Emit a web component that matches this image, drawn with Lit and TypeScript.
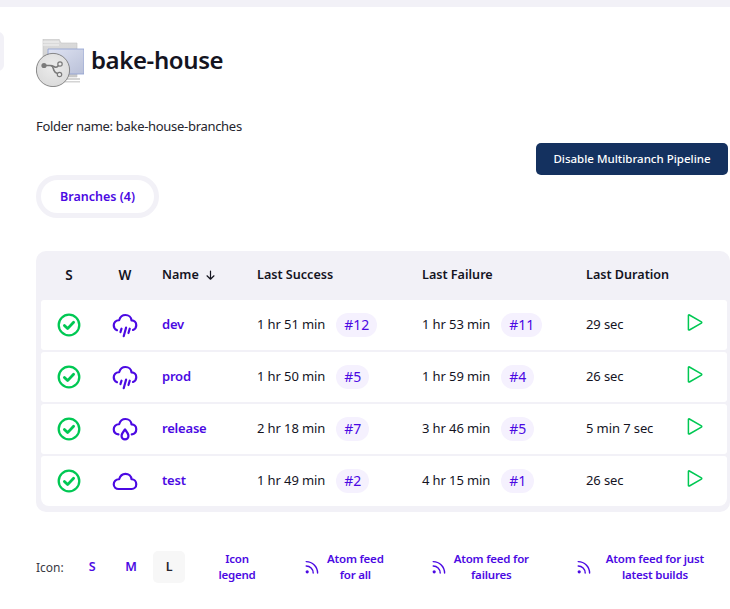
import { LitElement, html, css, svg } from 'lit';
import { customElement } from 'lit/decorators.js';

type Weather = 'rain' | 'drop' | 'cloud';

interface Branch {
  name: string;
  weather: Weather;
  success: [string, string];
  failure: [string, string];
  duration: string;
}

const BRANCHES: Branch[] = [
  { name: 'dev', weather: 'rain', success: ['1 hr 51 min', '#12'], failure: ['1 hr 53 min', '#11'], duration: '29 sec' },
  { name: 'prod', weather: 'rain', success: ['1 hr 50 min', '#5'], failure: ['1 hr 59 min', '#4'], duration: '26 sec' },
  { name: 'release', weather: 'drop', success: ['2 hr 18 min', '#7'], failure: ['3 hr 46 min', '#5'], duration: '5 min 7 sec' },
  { name: 'test', weather: 'cloud', success: ['1 hr 49 min', '#2'], failure: ['4 hr 15 min', '#1'], duration: '26 sec' },
];

const statusIcon = html`<svg class="status" viewBox="0 0 24 24" fill="none" stroke="#00c853" stroke-linecap="round" stroke-linejoin="round">
  <circle cx="12" cy="12" r="10.300" stroke-width="2.300"></circle>
  <path d="M7.400 12.400l3.200 3.200 6-6.400" stroke-width="2.800"></path>
</svg>`;

const weatherParts: Record<Weather, unknown> = {
  rain: svg`<path d="M4.600 16.800C2.800 16 1.600 14.200 1.600 12.200c0-2.600 2-4.600 4.600-4.600h.4C7.400 5 9.600 2.800 12.400 2.800c3 0 5.400 2.200 5.600 5h.2c2.400 0 4.200 2 4.200 4.400 0 2-1.200 3.600-3 4.400"></path>
    <path d="M8.800 15.400l-1 3.200M13 14.400l-2.200 8M16.400 15.400l-1.200 4"></path>`,
  drop: svg`<path d="M6 17C3.400 16.600 1.600 14.600 1.600 12.200c0-2.600 2-4.600 4.600-4.600h.4C7.400 5 9.600 2.800 12.400 2.800c3 0 5.400 2.200 5.600 5h.2c2.400 0 4.200 2 4.200 4.400 0 2.400-1.800 4.400-4.200 4.800"></path>
    <path d="M12 12.400c1.800 2.400 3.200 4 3.200 6a3.200 3.200 0 0 1-6.400 0c0-2 1.400-3.600 3.200-6z"></path>`,
  cloud: svg`<path d="M6.200 19.400c-2.600 0-4.600-2-4.600-4.400s2-4.600 4.600-4.600h.4C7.400 7.600 9.600 5.400 12.400 5.400c3 0 5.400 2.200 5.600 5h.2c2.400 0 4.200 2 4.200 4.500s-1.800 4.500-4.200 4.500z"></path>`,
};

const weatherIcon = (kind: Weather) => html`<svg class="weather" viewBox="0 0 24 24" fill="none" stroke="#4b09e3" stroke-width="2" stroke-linecap="round" stroke-linejoin="round">${weatherParts[kind]}</svg>`;

const playIcon = html`<svg class="play" viewBox="0 0 16 18" fill="none" stroke="#00c853" stroke-width="1.500" stroke-linejoin="round">
  <path d="M1.400 1.600c0-.6.5-.9 1-.6l12 6.900c.5.3.5.9 0 1.200l-12 6.900c-.5.3-1-.1-1-.6z"></path>
</svg>`;

const feedIcon = html`<svg class="feed" viewBox="0 0 14 14" fill="none" stroke="#4b09e3" stroke-width="1.400" stroke-linecap="round">
  <circle cx="2.200" cy="11.800" r="1.600" fill="#4b09e3" stroke="none"></circle>
  <path d="M1.200 6a7 7 0 0 1 7 7M1.200 1.600a11.400 11.400 0 0 1 11.400 11.400"></path>
</svg>`;

const folderIcon = html`<svg class="logo" viewBox="0 0 48 48" aria-hidden="true">
  <defs>
    <linearGradient id="sheet" x1="0" y1="0" x2="0" y2="1"><stop offset="0" stop-color="#dcdcdc"></stop><stop offset="1" stop-color="#c9c9c9"></stop></linearGradient>
    <linearGradient id="front" x1="0" y1="0" x2="1" y2="1"><stop offset="0" stop-color="#dfe3f2"></stop><stop offset="1" stop-color="#b9c0d8"></stop></linearGradient>
    <radialGradient id="disc" cx="0.5" cy="0.4" r="0.7"><stop offset="0" stop-color="#ececec"></stop><stop offset="1" stop-color="#d8d8d8"></stop></radialGradient>
  </defs>
  <path d="M7 0h16l2 4h16v34H7z" fill="url(#sheet)" stroke="#c4c4c4" stroke-width=".6"></path>
  <path d="M7 3h16M7 6h16" stroke="#f4f4f4" stroke-width="1"></path>
  <path d="M12 10h36v25H12z" fill="url(#front)" stroke="#8e9fd0" stroke-width=".8"></path>
  <path d="M22 39h22v2H22zM22 42h22v1.500H22z" fill="#d4d4d4"></path>
  <circle cx="17" cy="31" r="16.600" fill="url(#disc)" stroke="#6e6e6e" stroke-width=".8"></circle>
  <g stroke="#7a7a7a" stroke-width="1.600" fill="none">
    <path d="M9 26.500h5c3 0 3.500 1 5 1.500 1 .4 2.500 0 3.500-1.500"></path>
    <path d="M15 26.500c2 .5 2 2 3 5 .5 1.500 1.500 2.500 3.500 3"></path>
  </g>
  <circle cx="8" cy="26.500" r="2.600" fill="#7a7a7a"></circle>
  <circle cx="24" cy="25" r="2.200" fill="#ececec" stroke="#7a7a7a" stroke-width="1.200"></circle>
  <circle cx="23.500" cy="35.500" r="2.200" fill="#ececec" stroke="#7a7a7a" stroke-width="1.200"></circle>
</svg>`;

@customElement('app-root')
export class AppRoot extends LitElement {
  static styles = css`
    :host {
      display: block;
      width: 730px;
      height: 609px;
      overflow: hidden;
      position: relative;
      background: #fff;
      color: #14141f;
      font-family: 'Noto Sans', sans-serif;
      font-size: 13px;
    }
    a { color: #4b09e3; text-decoration: none; font-weight: 600; letter-spacing: -0.2px; }
    .topbar { height: 7px; background: #f2f1f7; }
    .side-tab {
      position: absolute;
      left: -10px;
      top: 32px;
      width: 14px;
      height: 39px;
      border-radius: 6px;
      background: #f2f1f7;
    }
    .page { padding: 29px 0 0 36px; }
    .heading { display: flex; align-items: flex-start; gap: 7px; height: 48px; }
    .logo { width: 48px; height: 48px; flex: none; margin-top: 3px; }
    h1 { margin: 0; font-size: 24px; font-weight: 600; line-height: 48px; letter-spacing: -0.4px; }
    .folder { margin-top: 33px; line-height: 18px; color: #25252e; letter-spacing: -0.3px; }
    .actions { display: flex; justify-content: flex-end; margin-top: 8px; }
    .disable {
      width: 192px;
      height: 32px;
      margin-right: 2px;
      padding: 0 0 2px;
      border: 0;
      border-radius: 5px;
      background: #14315f;
      color: #fff;
      font: 500 11.500px 'Noto Sans', sans-serif;
    }
    .tabs {
      display: inline-flex;
      border: 5px solid #f2f1f7;
      border-radius: 22px;
      height: 33px;
      padding: 0 19px;
      align-items: center;
      background: #fff;
    }
    .tabs a { font-size: 12.500px; letter-spacing: 0; }
    .table {
      margin-top: 33px;
      padding: 0 3px 6px 5px;
      background: #f2f1f7;
      border-radius: 10px;
      display: flex;
      flex-direction: column;
      gap: 2px;
    }
    .cols { display: grid; grid-template-columns: 56px 56px 95px 165px 164px 100px 50px; align-items: center; }
    .head { height: 47px; font-size: 12.600px; font-weight: 600; color: #14141f; }
    .head .center { font-size: 13.500px; }
    .row { height: 50px; background: #fff; border-radius: 3px; }
    .row:first-of-type { border-radius: 8px 8px 3px 3px; }
    .row:last-child { border-radius: 3px 3px 8px 8px; }
    .center { display: flex; justify-content: center; align-items: center; }
    .cell { padding-left: 9px; display: flex; align-items: center; white-space: nowrap; }
    .row .cell { padding-bottom: 2px; letter-spacing: -0.1px; }
    .sort { margin-left: 7px; width: 9px; height: 10px; }
    .pill {
      margin: 0 0 -2px 11px;
      padding: 0 8px 2px;
      height: 22px;
      border-radius: 12px;
      background: #f5f1fe;
      display: inline-flex;
      align-items: center;
      font-size: 14px;
      font-weight: 400;
      letter-spacing: 0;
    }
    .status { width: 24px; height: 24px; }
    .weather { width: 26px; height: 26px; }
    .action { display: flex; }
    .play { width: 16px; height: 18px; margin: 0 0 5px 10px; }
    .footer { display: flex; align-items: center; margin-top: 39px; height: 32px; font-size: 12px; }
    .footer a { font-size: 11.500px; line-height: 16px; text-align: center; }
    .footer a.size { font-size: 12.500px; }
    .label { color: #3a3a44; width: 40px; }
    .size { width: 32px; height: 32px; display: flex; align-items: center; justify-content: center; border-radius: 5px; margin-right: 7px; }
    .tight { margin-right: 6px; }
    .size.on { background: #f7f7f7; color: #25252e; }
    .legend { margin-left: 14px; width: 62px; }
    .link { display: flex; align-items: center; gap: 8px; }
    .feed { width: 14px; height: 14px; flex: none; }
    .all { margin-left: 37px; }
    .fail { margin-left: 48px; }
    .latest { margin-left: 48px; }
    .latest .feed { margin-right: 7px; }
  `;

  private linkCell(run: [string, string]) {
    return html`<div class="cell">${run[0]}<a class="pill" href="#">${run[1]}</a></div>`;
  }

  render() {
    return html`
      <div class="topbar"></div>
      <div class="side-tab"></div>
      <div class="page">
        <div class="heading">${folderIcon}<h1>bake-house</h1></div>
        <div class="folder">Folder name: bake-house-branches</div>
        <div class="actions"><button class="disable">Disable Multibranch Pipeline</button></div>
        <div class="tabs"><a href="#">Branches (4)</a></div>
        <div class="table">
          <div class="cols head">
            <div class="center">S</div>
            <div class="center">W</div>
            <div class="cell">Name
              <svg class="sort" viewBox="0 0 9 10" fill="none" stroke="#14141f" stroke-width="1.200" stroke-linecap="round" stroke-linejoin="round"><path d="M4.500 1v8M1 5.800l3.500 3.400 3.500-3.400"></path></svg>
            </div>
            <div class="cell">Last Success</div>
            <div class="cell">Last Failure</div>
            <div class="cell">Last Duration</div>
            <div></div>
          </div>
          ${BRANCHES.map(b => html`
            <div class="cols row">
              <div class="center">${statusIcon}</div>
              <div class="center">${weatherIcon(b.weather)}</div>
              <div class="cell"><a href="#">${b.name}</a></div>
              ${this.linkCell(b.success)}
              ${this.linkCell(b.failure)}
              <div class="cell">${b.duration}</div>
              <div class="action">${playIcon}</div>
            </div>
          `)}
        </div>
        <div class="footer">
          <span class="label">Icon:</span>
          <a class="size" href="#">S</a>
          <a class="size tight" href="#">M</a>
          <a class="size on" href="#">L</a>
          <a class="legend" href="#">Icon<br />legend</a>
          <div class="link all">${feedIcon}<a href="#">Atom feed<br />for all</a></div>
          <div class="link fail">${feedIcon}<a href="#">Atom feed for<br />failures</a></div>
          <div class="link latest">${feedIcon}<a href="#">Atom feed for just<br />latest builds</a></div>
        </div>
      </div>
    `;
  }
}
